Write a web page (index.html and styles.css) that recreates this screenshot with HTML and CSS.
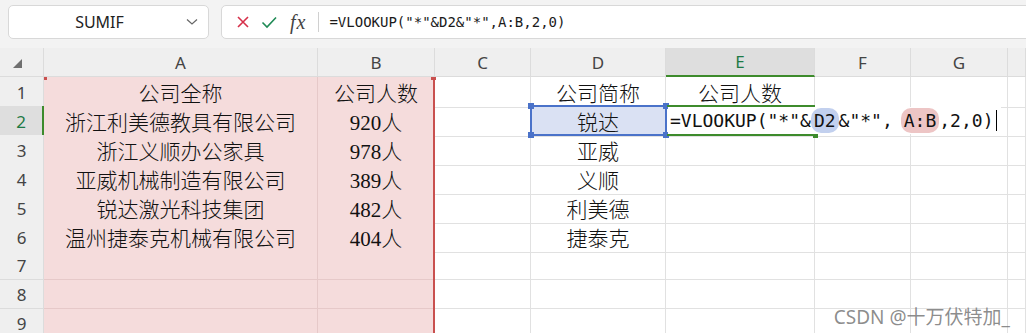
FILE: index.html
```html
<!DOCTYPE html>
<html lang="zh-CN">
<head>
  <meta charset="UTF-8" />
  <title>VLOOKUP 模糊匹配</title>
  <link rel="stylesheet" href="styles.css">
</head>
<body>
  <div class="toolbar">
    <div class="namebox">
      <span class="name">SUMIF</span>
      <svg class="chevron" width="12" height="8" viewBox="0 0 12 8"><path d="M1 1.5 L6 6 L11 1.5" fill="none" stroke="#666" stroke-width="1.2"/></svg>
    </div>
    <div class="formulabar">
      <svg class="icon" width="14" height="14" viewBox="0 0 14 14"><path d="M2 2 L12 12 M12 2 L2 12" stroke="#d6304a" stroke-width="1.6"/></svg>
      <svg class="icon" width="16" height="14" viewBox="0 0 16 14"><path d="M1.5 7.5 L6 12 L15 2.5" fill="none" stroke="#1f8a55" stroke-width="1.6"/></svg>
      <span class="fx">fx</span>
      <div class="divider"></div>
      <span class="formula">=VLOOKUP("*"&amp;D2&amp;"*",A:B,2,0)</span>
    </div>
  </div>

  <div class="sheet">
    <div class="row head">
      <div class="rn corner"><svg width="9" height="9" viewBox="0 0 9 9"><polygon points="9,0 9,9 0,9" fill="#6f6f6f"/></svg></div>
      <div>A</div><div>B</div><div>C</div><div>D</div><div class="active-col">E</div><div>F</div><div>G</div><div></div>
    </div>
    <div class="row">
      <div class="rn">1</div>
      <div class="pk">公司全称</div><div class="pk">公司人数</div><div></div><div>公司简称</div><div>公司人数</div><div></div><div></div><div></div>
    </div>
    <div class="row">
      <div class="rn active-row">2</div>
      <div class="pk">浙江利美德教具有限公司</div><div class="pk">920人</div><div></div><div class="sel">锐达</div><div></div><div></div><div></div><div></div>
    </div>
    <div class="row">
      <div class="rn">3</div>
      <div class="pk">浙江义顺办公家具</div><div class="pk">978人</div><div></div><div>亚威</div><div></div><div></div><div></div><div></div>
    </div>
    <div class="row">
      <div class="rn">4</div>
      <div class="pk">亚威机械制造有限公司</div><div class="pk">389人</div><div></div><div>义顺</div><div></div><div></div><div></div><div></div>
    </div>
    <div class="row">
      <div class="rn">5</div>
      <div class="pk">锐达激光科技集团</div><div class="pk">482人</div><div></div><div>利美德</div><div></div><div></div><div></div><div></div>
    </div>
    <div class="row">
      <div class="rn">6</div>
      <div class="pk">温州捷泰克机械有限公司</div><div class="pk">404人</div><div></div><div>捷泰克</div><div></div><div></div><div></div><div></div>
    </div>
    <div class="row">
      <div class="rn">7</div>
      <div class="pk"></div><div class="pk"></div><div></div><div></div><div></div><div></div><div></div><div></div>
    </div>
    <div class="row">
      <div class="rn">8</div>
      <div class="pk"></div><div class="pk"></div><div></div><div></div><div></div><div></div><div></div><div></div>
    </div>
    <div class="row">
      <div class="rn">9</div>
      <div class="pk"></div><div class="pk"></div><div></div><div></div><div></div><div></div><div></div><div></div>
    </div>

    <!-- range A:B referenced by the formula -->
    <div class="range-ab">
      <span class="rh rh-left"></span>
      <span class="rh rh-right"></span>
    </div>

    <!-- D2 reference box -->
    <div class="ref-d2">
      <span class="bh tl"></span><span class="bh tr"></span><span class="bh bl"></span><span class="bh br"></span>
    </div>

    <!-- E2 in edit mode -->
    <div class="edit-e2"><span class="fill-handle"></span></div>
    <div class="editor">=VLOOKUP("*"&amp;<span class="pill blue">D2</span>&amp;"*",<span class="pill red">A:B</span>,2,0)<span class="caret"></span></div>
  </div>

  <div class="watermark">CSDN @十万伏特加_</div>
</body>
</html>
```

FILE: styles.css
```css
body {
  margin: 0;
  background: #fff;
  overflow: hidden;
  font-family: "Noto Sans", "Noto Sans CJK SC", sans-serif;
}

/* top bar */
.toolbar {
  display: flex;
  gap: 12px;
  height: 48px;
  box-sizing: border-box;
  padding: 5px 0 9px 8px;
  background: #f3f3f3;
}
.namebox {
  width: 201px;
  display: flex;
  align-items: center;
  box-sizing: border-box;
  background: #fff;
  border: 1px solid #d8d8d8;
  border-radius: 5px;
  padding: 0 10px 0 4px;
}
.name {
  flex: 1;
  text-align: center;
  font-size: 16px;
  color: #222;
}
.formulabar {
  flex: 1;
  display: flex;
  align-items: center;
  margin-right: -12px;
  background: #fff;
  border: 1px solid #d8d8d8;
  border-radius: 5px;
  padding-left: 14px;
}
.icon {
  margin-right: 11px;
}
.fx {
  font-family: "Liberation Serif", serif;
  font-style: italic;
  font-size: 20px;
  color: #444;
  margin-left: 2px;
  letter-spacing: 1px;
}
.divider {
  width: 1px;
  height: 20px;
  background: #d0d0d0;
  margin: 0 10px 0 12px;
}
.formula {
  font-family: "DejaVu Sans Mono", monospace;
  font-size: 14px;
  color: #1a1a1a;
}

/* grid */
.sheet {
  position: relative;
}
.row {
  display: grid;
  grid-template-columns: 44px 274px 117px 96px 135px 149px 96px 97px 1fr;
  height: 29px;
}
.row > div {
  box-sizing: border-box;
  display: flex;
  align-items: center;
  justify-content: center;
  border-right: 1px solid #e1e1e1;
  border-bottom: 1px solid #e1e1e1;
  font-family: "Liberation Serif", "Noto Sans CJK SC", serif;
  font-size: 21px;
  font-weight: 300;
  color: #111;
  white-space: nowrap;
}
.row > .rn,
.head > div {
  font-family: "Noto Sans", sans-serif;
  font-size: 17px;
  font-weight: 400;
  color: #444;
  background: #efefef;
  border-color: #dcdcdc;
}
.corner {
  justify-content: flex-end !important;
  align-items: flex-end !important;
  padding: 0 21px 8px 0;
}
.active-col {
  background: #dedede !important;
  color: #1d7a45 !important;
  border-bottom: 2px solid #3d8b2c !important;
}
.active-row {
  background: #dedede !important;
  color: #1d7a45 !important;
  border-right: 2px solid #3d8b2c !important;
}
.row > .pk {
  background: #f5dcdc;
  border-color: #e6c9c9;
}
.row > .sel {
  background: #dae1f3;
}

/* overlays */
.range-ab {
  position: absolute;
  left: 44px;
  top: 29px;
  width: 391px;
  height: 260px;
  box-sizing: border-box;
  border-right: 2px solid #c9504f;
}
.rh {
  position: absolute;
  top: 0;
  width: 5px;
  height: 3px;
  background: #c9504f;
}
.rh-left { left: 0; width: 3px; }
.rh-right { right: -3px; }

.ref-d2 {
  position: absolute;
  left: 530px;
  top: 57px;
  width: 137px;
  height: 31px;
  box-sizing: border-box;
  border: 2px solid #4a72c9;
}
.bh {
  position: absolute;
  width: 6px;
  height: 6px;
  background: #4a72c9;
}
.tl { left: -4px; top: -4px; }
.tr { right: -4px; top: -4px; }
.bl { left: -4px; bottom: -4px; }
.br { right: -4px; bottom: -4px; }

.edit-e2 {
  position: absolute;
  left: 667px;
  top: 57px;
  width: 148px;
  height: 31px;
  box-sizing: border-box;
  border-top: 2px solid #3d8b2c;
  border-bottom: 2px solid #3d8b2c;
}
.fill-handle {
  position: absolute;
  right: -3px;
  bottom: -4px;
  width: 5px;
  height: 5px;
  background: #3d8b2c;
}
.editor {
  position: absolute;
  left: 668px;
  top: 59px;
  height: 27px;
  display: flex;
  align-items: center;
  padding: 0 4px 0 2px;
  background: #fff;
  font-family: "DejaVu Sans Mono", monospace;
  font-size: 18px;
  color: #111;
  white-space: pre;
}
.pill {
  border-radius: 10px;
  padding: 2px 3px;
}
.pill.blue { background: #c2d0ee; }
.pill.red { background: #edc5c5; margin-left: 8px; }
.caret {
  width: 1px;
  height: 21px;
  background: #000;
  margin-left: 3px;
}

.watermark {
  position: absolute;
  right: 16px;
  top: 302px;
  font-family: "Noto Sans", "Noto Sans CJK SC", sans-serif;
  font-size: 19px;
  color: rgba(120, 120, 120, 0.85);
}
```
